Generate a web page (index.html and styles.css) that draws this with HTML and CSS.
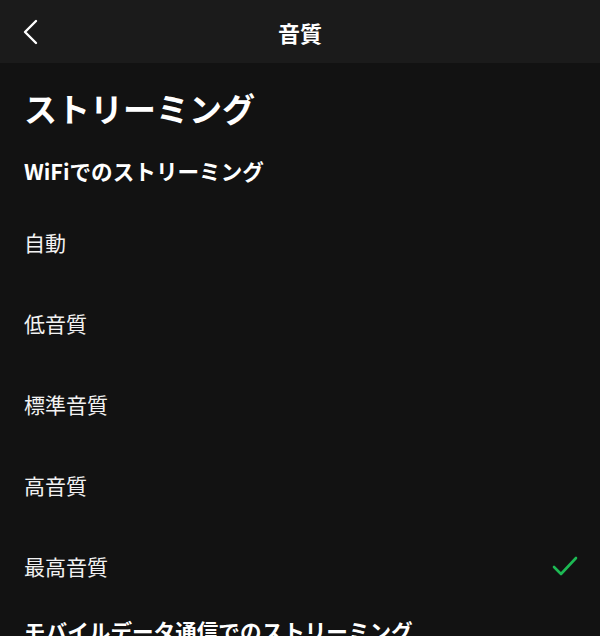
FILE: index.html
```html
<!DOCTYPE html>
<html lang="ja">
<head>
<meta charset="utf-8">
<link rel="stylesheet" href="styles.css">
</head>
<body>
<header class="topbar">
  <button class="back" aria-label="戻る">
    <svg width="18" height="26" viewBox="0 0 18 26"><path d="M15 2 L4 13 L15 24" fill="none" stroke="#fff" stroke-width="2.4" stroke-linecap="round" stroke-linejoin="round"/></svg>
  </button>
  <div class="title">音質</div>
</header>
<main class="content">
  <h1 class="h1">ストリーミング</h1>
  <h2 class="h2">WiFiでのストリーミング</h2>
  <ul class="list">
    <li class="row">自動</li>
    <li class="row">低音質</li>
    <li class="row">標準音質</li>
    <li class="row">高音質</li>
    <li class="row">最高音質
      <svg class="check" width="26" height="22" viewBox="0 0 26 22"><path d="M2 12 L9 19 L24 3" fill="none" stroke="#1db954" stroke-width="2.6" stroke-linecap="round" stroke-linejoin="round"/></svg>
    </li>
  </ul>
  <h2 class="h2 h2b">モバイルデータ通信でのストリーミング</h2>
</main>
</body>
</html>
```

FILE: styles.css
```css
html, body {
  margin: 0;
  padding: 0;
  background: #121212;
  color: #fff;
  font-family: "Noto Sans CJK JP", "Noto Sans", sans-serif;
  height: 636px;
  overflow: hidden;
}
.topbar {
  height: 63px;
  background: #1b1b1b;
  display: flex;
  align-items: center;
  justify-content: center;
  position: relative;
}
.back {
  position: absolute;
  left: 21px;
  top: 19px;
  background: none;
  border: 0;
  padding: 0;
  width: 18px;
  height: 26px;
  display: flex;
}
.title {
  font-size: 22px;
  font-weight: 700;
  line-height: 30px;
}
.content {
  padding: 0 24px;
}
.h1 {
  margin: 23px 0 0;
  font-size: 33px;
  line-height: 44px;
  font-weight: 700;
}
.h2 {
  margin: 26px 0 0;
  font-size: 21.6px;
  line-height: 30px;
  font-weight: 700;
  white-space: nowrap;
}
.list {
  list-style: none;
  margin: 15px 0 0;
  padding: 0;
}
.row {
  height: 81px;
  display: flex;
  align-items: center;
  justify-content: space-between;
  font-size: 21px;
  font-weight: 400;
  color: #f2f2f2;
}
.check {
  margin-right: -2px;
}
.h2b {
  margin-top: 10px;
}
```
